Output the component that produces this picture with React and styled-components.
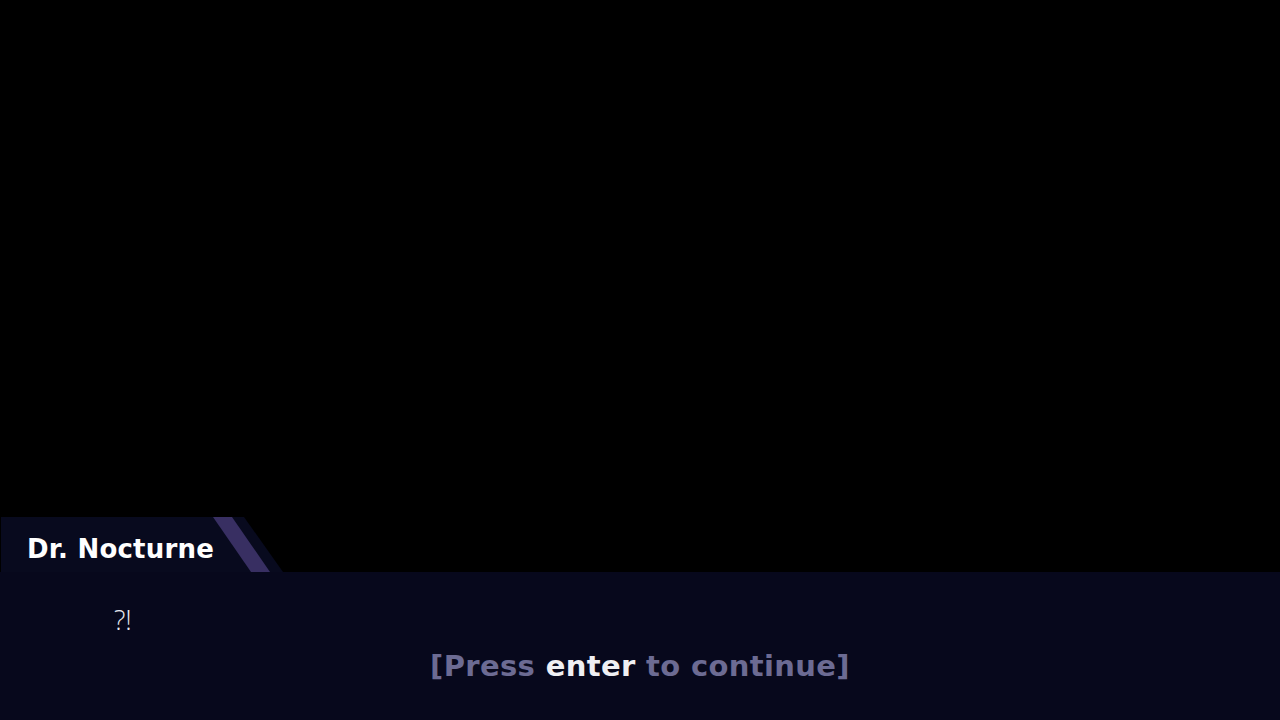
import styled, { createGlobalStyle } from 'styled-components'

const Global = createGlobalStyle`
    html, body {
        margin: 0;
        padding: 0;
        background: #000;
    }
    #root {
        height: 720px;
    }
`

const Screen = styled.div`
    width: 1280px;
    height: 720px;
    display: flex;
    flex-direction: column;
    justify-content: flex-end;
    background: #000;
    overflow: hidden;
`

const NameTab = styled.div`
    position: relative;
    width: 282px;
    height: 55px;
    margin-left: 1px;
    box-sizing: border-box;
    display: flex;
    align-items: center;
    padding-left: 26px;
    background: #080a1e;
    clip-path: polygon(0 0, 243px 0, 282px 100%, 0 100%);

    &::after {
        content: '';
        position: absolute;
        inset: 0;
        background: #382f62;
        clip-path: polygon(212px 0, 231px 0, 269px 100%, 250px 100%);
    }
`

const Name = styled.span`
    font-family: 'DejaVu Sans', sans-serif;
    font-weight: 700;
    font-size: 26px;
    letter-spacing: 0.2px;
    color: #ffffff;
    margin-top: 9px;
`

const Box = styled.div`
    height: 148px;
    background: #07081c;
    display: flex;
    flex-direction: column;
    padding: 30px 0 0 114px;
    box-sizing: border-box;
`

const Line = styled.div`
    font-family: 'Open Sans', sans-serif;
    font-weight: 300;
    font-size: 27px;
    line-height: 36px;
    color: #e8e8f0;
    height: 36px;
`

const Prompt = styled.div`
    margin-left: -114px;
    margin-top: 11px;
    text-align: center;
    font-family: 'DejaVu Sans', sans-serif;
    font-weight: 700;
    font-size: 29px;
    letter-spacing: 0.35px;
    color: #6c6b93;
`

const Key = styled.span`
    color: #efeff3;
`

export default function App() {
    return (
        <Screen>
            <Global />
            <NameTab>
                <Name>Dr. Nocturne</Name>
            </NameTab>
            <Box>
                <Line>?!</Line>
                <Prompt>
                    [Press <Key>enter</Key> to continue]
                </Prompt>
            </Box>
        </Screen>
    )
}
